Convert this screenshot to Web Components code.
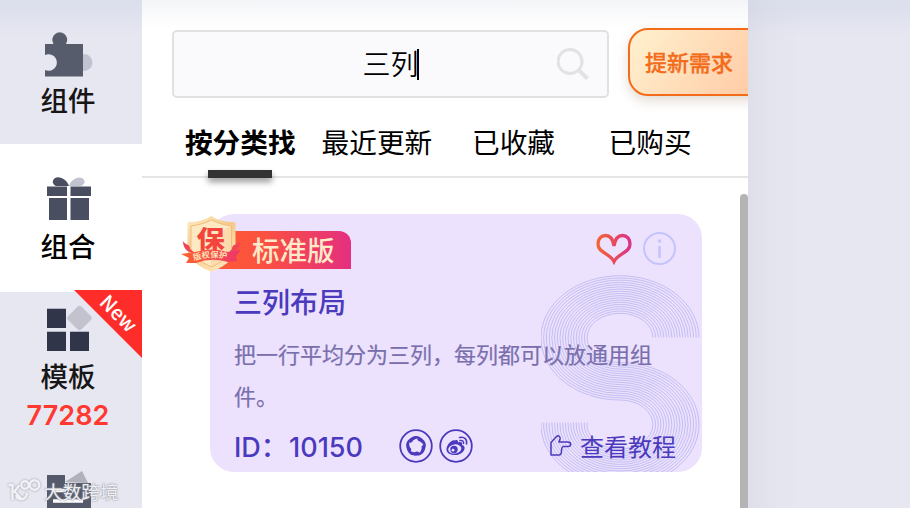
<!DOCTYPE html>
<html lang="zh-CN">
<head>
<meta charset="utf-8">
<title>组合</title>
<style>
  html, body { margin: 0; height: 100%; overflow: hidden; }
  body { font-family: Inter, "Noto Sans CJK SC", sans-serif; color: #0c0c0c; }
</style>
</head>
<body>
<app-shell>
  <side-item slot="side" label="组件" style="--h:144px;--pad:32px;--gap:1px">
    <svg width="54" height="46" viewBox="0 -1 54 46">
      <circle cx="45" cy="29.500" r="8.500" fill="#c2c3d0"/>
      <path d="M6 11h8.500a7.500 7.500 0 1 1 12.500 0H44v32.500H6V37a8.300 8.300 0 1 0 0-15z" fill="#575c6d"/>
    </svg>
  </side-item>
  <side-item slot="side" label="组合" active style="--h:148px;--pad:32px;--gap:3px">
    <svg width="54" height="46" viewBox="0 0 54 46">
      <path d="M30 10C31 5 38-.500 43 2c4 3 3 6-1 8z" fill="#c2c3d0"/>
      <path d="M30 10C28 4 21-.500 16 2c-4 3-2 7 1 8z" fill="#4a4e61"/>
      <path d="M8 10.500h20v9.500H8zM31.500 10.500H52v9.500H31.500zM10 22h18v22H10zM31.500 22H50v22H31.500z" fill="#4a4e61"/>
    </svg>
  </side-item>
  <side-item slot="side" label="模板" count="77282" badge="New" style="--h:158px;--pad:14px;--gap:3px">
    <svg width="54" height="46" viewBox="0 0 54 46">
      <rect x="31" y="2.500" width="19" height="19" rx="3" fill="#c3c3cf" transform="rotate(45 40.500 12)"/>
      <path d="M8 3h19v19H8zM8 26h19v19H8zM31 26h19v19H31z" fill="#30354a"/>
      <path d="M8 2.500h19M8 25.500h19M31 25.500h19" stroke="#b4b6c6"/>
    </svg>
  </side-item>
  <side-item slot="side" label="" style="--h:148px;--pad:23px;--gap:4px">
    <svg width="54" height="46" viewBox="0 0 54 46">
      <path d="M26 9L43-2l6 12z" fill="#b0b1bb"/>
      <path d="M8 2h18v8h26v36H8z" fill="#555a6b"/>
      <path d="M14 17.500h13M14 28h30" stroke="#fff" stroke-width="3.500"/>
    </svg>
  </side-item>

  <search-bar value="三列" action="提新需求"></search-bar>
  <tab-bar>
    <tab-item active>按分类找</tab-item>
    <tab-item>最近更新</tab-item>
    <tab-item>已收藏</tab-item>
    <tab-item>已购买</tab-item>
  </tab-bar>
  <combo-card tag="标准版" name="三列布局" number="10150">把一行平均分为三列，每列都可以放通用组件。</combo-card>
</app-shell>

<script>
const CJK = `"Noto Sans CJK SC", sans-serif`;

class BaseElement extends HTMLElement {
  constructor() {
    super();
    this.shadow = this.attachShadow({ mode: "open" });
  }
  connectedCallback() {
    this.shadow.innerHTML = `<style>${this.renderStyle()}</style>${this.renderHTML()}`;
  }
}

customElements.define("app-shell", class extends BaseElement {
  renderStyle() {
    return `
      :host { display: flex; position: relative; height: 508px; overflow: hidden; background: #e7e7f1; }
      aside { width: 142px; flex: none; }
      main { width: 606px; flex: none; background: #fff; position: relative; overflow: hidden; display: flex; flex-direction: column; }
      .rest { flex: 1; background: linear-gradient(90deg, #dfdfe9, #e3e3ed 20px, #e7e7f1 54px); }
      .bar { position: absolute; right: 0; top: 194px; width: 8px; height: 330px; background: #b4b4b4; border-radius: 4px; }
      .haze { position: absolute; inset: 0 0 auto 0; height: 37px; pointer-events: none;
        background: linear-gradient(rgba(190,202,222,.28), rgba(190,202,222,.22) 12px, rgba(190,202,222,0)); }
      main .haze { background: linear-gradient(#f4f5f8, rgba(255,255,255,0) 28px); }
      .mark { position: absolute; left: 6px; top: 477px; display: flex; align-items: center; gap: 3px;
        color: rgba(255,255,255,.85); font: 18.700px/28px ${CJK}; text-shadow: 0 0 2px #9599a6, 0 0 1px #8b8f9c; }
      .mark svg { filter: drop-shadow(0 0 1px #9599a6); }
    `;
  }
  renderHTML() {
    return `
      <aside><slot name="side"></slot></aside>
      <main><div class="haze"></div><slot></slot><div class="bar"></div></main>
      <div class="rest"></div>
      <div class="haze" style="width:142px"></div>
      <div class="haze" style="left:748px"></div>
      <div class="mark">
        <svg width="35" height="26" viewBox="0 0 35 26" fill="none" stroke="#f2f2f6" stroke-width="2.400">
          <path d="M2.500 7h4v15M13.500 7l-5 6.500 7 7.500M10 17c1 6 10 6 11-2"/>
          <circle cx="19" cy="7" r="3.700"/><circle cx="28.500" cy="7" r="4.700"/>
        </svg>
        <span>大数跨境</span>
      </div>
    `;
  }
});

customElements.define("side-item", class extends BaseElement {
  renderStyle() {
    const active = this.hasAttribute("active");
    return `
      :host { display: flex; flex-direction: column; align-items: center; box-sizing: border-box; position: relative;
        height: var(--h); padding: var(--pad) 6px 0 0; background: ${active ? "#fff" : "#e7e7f1"}; }
      ::slotted(svg) { display: block; flex: none; margin-right: 4px; overflow: visible; }
      .label { margin-top: var(--gap); font: 500 27.500px/40px ${CJK}; color: ${active ? "#000" : "#161616"}; }
      .count { margin-top: 3px; font: 600 27px/36px Inter, sans-serif; color: #ff3830; letter-spacing: .1px; }
      .corner { position: absolute; right: 0; top: -2px; width: 68px; height: 68px; background: #ff2d2a;
        clip-path: polygon(0 0, 100% 0, 100% 100%); }
      .corner b { position: absolute; left: 20px; top: 9px; width: 50px; text-align: center;
        font: 500 20px/28px "Noto Sans CJK SC", sans-serif; color: #fff; transform: rotate(45deg); }
    `;
  }
  renderHTML() {
    const count = this.getAttribute("count");
    const badge = this.getAttribute("badge");
    return `
      <slot></slot>
      <div class="label">${this.getAttribute("label")}</div>
      ${count ? `<div class="count">${count}</div>` : ""}
      ${badge ? `<div class="corner"><b>${badge}</b></div>` : ""}
    `;
  }
});

customElements.define("search-bar", class extends BaseElement {
  renderStyle() {
    return `
      :host { display: flex; gap: 19px; padding: 28px 0 0 30px; position: relative; }
      .field { box-sizing: border-box; width: 437px; height: 68px; margin-top: 2px; flex: none; display: grid;
        grid-template-columns: 32px 1fr 32px; align-items: center; padding: 0 18px;
        border: 2px solid #dfe1e3; border-radius: 5px; background: #fafafd; }
      .value { display: flex; justify-content: center; align-items: center; font: 350 28px/38px ${CJK}; color: #000; padding-bottom: 2px; }
      .value i { width: 2px; height: 31px; background: #000; margin: 2px 0 0 -2px; }
      .action { box-sizing: border-box; width: 150px; height: 68px; flex: none; padding-left: 15px;
        border: 2px solid #f26c1b; border-radius: 20px; background: linear-gradient(125deg, #fff1cf, #ffcba5 88%);
        box-shadow: 0 5px 12px rgba(120,80,40,.2); font: 500 22px/63px ${CJK}; color: #f26c1b; -webkit-text-stroke: .3px #f26c1b; }
    `;
  }
  renderHTML() {
    return `
      <div class="field">
        <span></span>
        <div class="value">${this.getAttribute("value")}<i></i></div>
        <svg width="32" height="34" viewBox="0 0 32 34" fill="none" stroke="#e1e1e6" stroke-width="3">
          <circle cx="13" cy="14.500" r="12"/><path d="M22 23.500l8.500 8" stroke-width="3.800"/>
        </svg>
      </div>
      <div class="action">${this.getAttribute("action")}</div>
    `;
  }
});

customElements.define("tab-bar", class extends BaseElement {
  renderStyle() {
    return `
      :host { display: grid; grid-template-columns: repeat(4, 136.600px); box-sizing: border-box; height: 80px;
        padding: 21px 0 0 30px; border-bottom: 2px solid #e5e5e7; }
    `;
  }
  renderHTML() {
    return `<slot></slot>`;
  }
});

customElements.define("tab-item", class extends BaseElement {
  renderStyle() {
    const active = this.hasAttribute("active");
    return `
      :host { display: flex; flex-direction: column; align-items: center; white-space: nowrap;
        font: ${active ? 700 : 400} 27.700px/44px ${CJK}; color: #000; }
      .line { width: 64px; height: 8px; flex: none; margin-top: 7px; background: #333; box-shadow: 0 4px 6px rgba(0,0,0,.4); }
    `;
  }
  renderHTML() {
    return `<span><slot></slot></span>${this.hasAttribute("active") ? `<div class="line"></div>` : ""}`;
  }
});

customElements.define("guard-badge", class extends BaseElement {
  renderStyle() {
    return `:host { display: block; width: 60px; height: 56px; } svg { display: block; overflow: visible; }`;
  }
  renderHTML() {
    return `
      <svg width="60" height="56" viewBox="0 0 60 56">
        <defs>
          <linearGradient id="gold" x1="0" y1="0" x2=".6" y2="1"><stop stop-color="#ffedc5"/><stop offset=".5" stop-color="#f5c989"/><stop offset="1" stop-color="#ffe5b7"/></linearGradient>
          <linearGradient id="red" x2="1"><stop stop-color="#ff642d"/><stop offset="1" stop-color="#ec356c"/></linearGradient>
          <path id="curve" d="M13 45Q30 38.500 49 44"/>
        </defs>
        <path d="M30.500 0c6 4 14 6 22.500 6 1 0 1.500 1 1.500 2v25c0 10-12 18-24 23C18 51 6.500 43 6.500 33V8c0-1 .5-2 1.500-2 8 0 16-2 22.500-6z" fill="url(#gold)"/>
        <path d="M30.500 4c6 3 12 5 20 6v22c0 8-10 14-20 19C20 46 10 40 10 32V10c8-1 14-3 20.500-6z" fill="#ffe9c2" stroke="#edbd7c"/>
        <path d="M50 10v22c0 8-10 14-20 19V22z" fill="#f7cd94" opacity=".5"/>
        <path d="M14 37C7 37 2 33 2 25c3 5 7 2 7 8zM47 37c7 0 12-4 12-12-3 5-8 2-8 8z" fill="#ef4557"/>
        <path d="M14 36Q30 31 47 36l13-2-5 6 1 5-9 1Q30 41 15 47l-10 0 3-5-8-4z" fill="url(#red)"/>
        <text transform="translate(15.500 31.500) scale(1.180 1)" font-family="Noto Sans CJK SC" font-weight="900" font-size="24" fill="#f4443e">保</text>
        <text font-family="Noto Sans CJK SC" font-weight="700" font-size="8.300" fill="#ffe0b0"><textPath href="#curve">版权保护</textPath></text>
      </svg>
    `;
  }
});

customElements.define("combo-card", class extends BaseElement {
  renderStyle() {
    return `
      :host { display: block; position: relative; margin: 36px 46px 0 68px; height: 258px; }
      .card { box-sizing: border-box; height: 258px; padding: 17px 26px 0 24px; position: relative; overflow: hidden;
        border-radius: 24px; background: #ece2fe; color: #4b3abd; }
      .pattern { position: absolute; right: 0; top: 0; }
      .head, .foot { display: flex; align-items: center; position: relative; }
      .head { height: 38px; }
      .tag { margin-left: -19px; width: 99px; height: 38px; padding-left: 37px; border-radius: 0 12px 0 0;
        background: linear-gradient(90deg, #ff5a36, #fb513f 35%, #e42f80); color: #ffe9cb; font: 500 27.500px/36px ${CJK}; white-space: nowrap; }
      .heart { margin: -2px 11px 0 auto; }
      .info { margin-top: -3px; }
      h2 { margin: 11px 0 0; font: 500 28px/42px ${CJK}; position: relative; }
      p { margin: 10px 0 0; width: 420px; font: 400 22px/42px ${CJK}; color: #7a6fad; position: relative; -webkit-text-stroke: .2px #7a6fad; }
      .foot { margin-top: 13px; height: 34px; }
      .id { font: 500 27px/34px Inter, ${CJK}; display: flex; width: 165px; white-space: nowrap; padding-top: 3px; }
      .id span { width: 55px; }
      .share { display: flex; gap: 6px; }
      .guide { margin-left: auto; display: flex; align-items: center; gap: 8px; font: 400 24px/32px ${CJK}; }
      .guide span { padding-bottom: 1px; }
      svg { display: block; flex: none; }
      guard-badge { position: absolute; left: -29px; top: 2px; }
    `;
  }
  // Concentric strands that swap sides in the middle of the S
  renderStrands() {
    let d = "";
    for (let i = 0; i < 18; i++) {
      const t = i / 17;
      const rx = 79 - 46 * t, ry = 62 - 37.5 * t;
      const bx = 33 + 46 * t, by = 24.5 + 37.5 * t;
      d += `M${79 + rx} 123.500A${rx} ${ry} 0 1 0 ${79 - rx} 124A${rx} ${ry} 0 0 0 79 ${124 + ry}`
        + `A${bx} ${by} 0 1 1 ${79 - bx} 208.500`;
    }
    return d;
  }
  renderHTML() {
    const blade = "M9.500 12.500C12 6 20 5 24 11c-4.500-2.500-9-1.500-11 2-1 1-2.500 1-3.500-.5z";
    return `
      <div class="card">
        <svg class="pattern" width="161" height="258" viewBox="0 0 161 258">
          <path d="${this.renderStrands()}" fill="none" stroke="#c1baf0" stroke-width=".95"/>
        </svg>
        <div class="head">
          <div class="tag">${this.getAttribute("tag")}</div>
          <svg class="heart" width="36" height="32" viewBox="0 0 36 32">
            <defs><linearGradient id="love" x2="1"><stop stop-color="#f36435"/><stop offset="1" stop-color="#dc3284"/></linearGradient></defs>
            <path d="M18 13C17 6 14 2.500 9.500 2.500 5 2.500 2 6 2 11c0 9 12 9 16 17.500C22 20 34 20 34 11c0-5-3-8.500-7.500-8.500C22 2.500 19 6 18 13z" fill="none" stroke="url(#love)" stroke-width="3.300"/>
          </svg>
          <svg class="info" width="33" height="33" viewBox="0 0 33 33" fill="none" stroke="#c5c3fc" stroke-width="2">
            <circle cx="16.500" cy="16.500" r="15.500"/><path d="M16.500 14v12" stroke-width="2.500"/><circle cx="16.500" cy="9" r="1.700" fill="#c5c3fc" stroke="none"/>
          </svg>
        </div>
        <h2>${this.getAttribute("name")}</h2>
        <p><slot></slot></p>
        <div class="foot">
          <div class="id"><span>ID：</span>${this.getAttribute("number")}</div>
          <div class="share">
            <svg width="34" height="34" viewBox="0 0 34 34" fill="#4b3abd">
              <circle cx="17" cy="17" r="15.800" fill="none" stroke="#4b3abd" stroke-width="1.800"/>
              ${[0, 72, 144, 216, 288].map((deg) => `<path d="${blade}" transform="rotate(${deg} 17 17)"/>`).join("")}
            </svg>
            <svg width="34" height="34" viewBox="0 0 34 34" fill="#4b3abd">
              <circle cx="17" cy="17" r="15.800" fill="none" stroke="#4b3abd" stroke-width="1.800"/>
              <path d="M16 11.500c2-1 3.500 0 3 2 3-1 5 0 4 2.500 2 .6 3 2 2.500 4-1 4-6 6.500-11 6-4.500-.4-7.500-3-7-6.500C8 15.500 13 10 16 11.500z"/>
              <ellipse cx="15.800" cy="20" rx="6.600" ry="4.600" fill="#ece2fe" transform="rotate(-8 16 20)"/>
              <circle cx="15" cy="20.500" r="3.700"/><circle cx="14" cy="21.200" r="1.400" fill="#ece2fe"/>
              <path d="M20.500 8.500c5-1.200 8 2 7 6.500M21 11.500c2.500-.5 4 1 3.500 3" fill="none" stroke="#4b3abd" stroke-width="1.500" stroke-linecap="round"/>
            </svg>
          </div>
          <div class="guide">
            <svg width="23" height="22" viewBox="0 0 23 22" fill="none" stroke="#4b3abd" stroke-width="1.500" stroke-linejoin="round">
              <path d="M2 7.500L7.500 1.500c2-1.500 4 0 3.500 2.500L10 7h9c3.500 0 3.500 4.500 0 4.500h-5c0 0-1.500 1-1.500 4 0 2.500-1 4.500-2.500 4.500H2z"/>
            </svg>
            <span>查看教程</span>
          </div>
        </div>
      </div>
      <guard-badge></guard-badge>
    `;
  }
});
</script>
</body>
</html>
